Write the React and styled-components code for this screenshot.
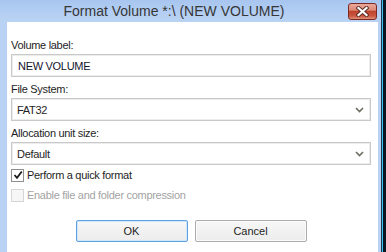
import styled, { createGlobalStyle } from "styled-components";

const GlobalStyle = createGlobalStyle`
  html, body {
    margin: 0;
    padding: 0;
    background: #0c1622;
    overflow: hidden;
  }
`

function Chevron() {
  return (
    <svg width="9" height="6" viewBox="0 0 9 6">
      <path d="M1 1 L4.5 4.5 L8 1" fill="none" stroke="#6b6e60" strokeWidth="1.6" />
    </svg>
  )
}

function CloseGlyph() {
  return (
    <svg width="13" height="11" viewBox="0 0 13 11">
      <path d="M2.5 2 L10.5 9 M10.5 2 L2.5 9" stroke="#5a2a24" strokeWidth="4" strokeLinecap="square" />
      <path d="M2.5 2 L10.5 9 M10.5 2 L2.5 9" stroke="#ffffff" strokeWidth="2.2" strokeLinecap="square" />
    </svg>
  )
}

function Check() {
  return (
    <svg width="10" height="10" viewBox="0 0 10 10">
      <path d="M1.5 5 L4 7.8 L8.8 1.5" fill="none" stroke="#1c1c1c" strokeWidth="1.8" />
    </svg>
  )
}

export default function App() {
  return (
    <Screen>
      <GlobalStyle />
      <Window>
        <TitleBar>
          <Title>Format Volume *:\ (NEW VOLUME)</Title>
          <CloseButton><CloseGlyph /></CloseButton>
        </TitleBar>
        <Body>
          <Fields>
            <Field>
              <Label>Volume label:</Label>
              <TextBox>NEW VOLUME</TextBox>
            </Field>
            <Field>
              <Label>File System:</Label>
              <Select>FAT32<Chevron /></Select>
            </Field>
            <Field>
              <Label>Allocation unit size:</Label>
              <Select>Default<Chevron /></Select>
            </Field>
          </Fields>
          <CheckRow>
            <Box><Check /></Box>
            <CheckText>Perform a quick format</CheckText>
          </CheckRow>
          <CheckRow disabled>
            <Box disabled />
            <CheckText disabled>Enable file and folder compression</CheckText>
          </CheckRow>
          <Buttons>
            <Button primary>OK</Button>
            <Button>Cancel</Button>
          </Buttons>
        </Body>
      </Window>
    </Screen>
  )
}

const Screen = styled.div`
  width: 386px;
  height: 252px;
  display: flex;
`

const Window = styled.div`
  width: 381px;
  height: 100%;
  display: flex;
  flex-direction: column;
  background: #b9d2f3;
  box-shadow: 1px 0 0 #1d3550, 2px 0 0 #3fc4f2;
  font-family: "Liberation Sans", Arial, sans-serif;
`

const TitleBar = styled.div`
  height: 22px;
  display: flex;
  align-items: flex-start;
  background: linear-gradient(#a7c5ef, #b4cff3 60%, #bad3f4);
`

const Title = styled.div`
  flex: 1;
  text-align: center;
  font-size: 14px;
  line-height: 22px;
  color: #363636;
`

const CloseButton = styled.div`
  width: 29px;
  height: 17px;
  margin: 3px 4px 0 0;
  box-sizing: border-box;
  border: 1px solid #7a2a22;
  border-radius: 3px;
  display: flex;
  align-items: center;
  justify-content: center;
  background: linear-gradient(#e9a99a, #dc8a78 40%, #c0432e 50%, #c9573f 80%, #e0917b);
`

const Body = styled.div`
  flex: 1;
  margin: 0 3px 0 7px;
  padding: 17px 7px 0 4px;
  background: #ffffff;
  display: flex;
  flex-direction: column;
`

const Fields = styled.div`
  display: flex;
  flex-direction: column;
  gap: 6px;
`

const Field = styled.div`
  display: flex;
  flex-direction: column;
  gap: 2px;
`

const Label = styled.div`
  font-size: 11px;
  line-height: 13px;
  letter-spacing: -0.3px;
  color: #1e1e1e;
`

const TextBox = styled.div`
  height: 23px;
  box-sizing: border-box;
  border: 1px solid #c9c9c9;
  box-shadow: inset 0 0 0 1px #ececec;
  padding: 0 6px;
  display: flex;
  align-items: center;
  font-size: 11px;
  letter-spacing: -0.3px;
  color: #14142e;
`

const Select = styled(TextBox)`
  justify-content: space-between;
  padding: 0 6px 0 5px;
  color: #1e1e1e;
`

const CheckRow = styled.div`
  height: 20px;
  display: flex;
  align-items: center;
  gap: 3px;
`

const Box = styled.div`
  width: 13px;
  height: 13px;
  box-sizing: border-box;
  border: 1px solid ${p => (p.disabled ? "#d6d6d6" : "#8f8f8f")};
  background: ${p => (p.disabled ? "#f6f6f6" : "#ffffff")};
  display: flex;
  align-items: center;
  justify-content: center;
`

const CheckText = styled.span`
  font-size: 11px;
  letter-spacing: -0.3px;
  color: ${p => (p.disabled ? "#a3a3a3" : "#1e1e1e")};
`

const Buttons = styled.div`
  margin-top: 15px;
  display: flex;
  justify-content: center;
  gap: 7px;
`

const Button = styled.div`
  width: 112px;
  height: 22px;
  box-sizing: border-box;
  border: 1px solid ${p => (p.primary ? "#5ea2e0" : "#acacac")};
  box-shadow: inset 0 0 0 1px ${p => (p.primary ? "#cfe6fb" : "#fbfbfb")};
  border-radius: 2px;
  background: linear-gradient(#f7f7f7, #ececec);
  display: flex;
  align-items: center;
  justify-content: center;
  font-size: 11px;
  color: #1e1e1e;
`
